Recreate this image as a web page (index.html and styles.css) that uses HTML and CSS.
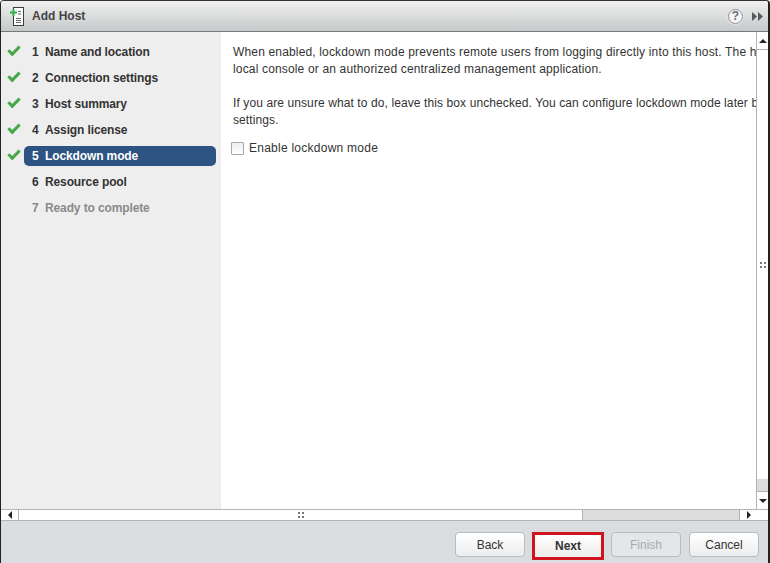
FILE: index.html
```html
<!DOCTYPE html>
<html lang="en">
<head>
    <meta charset="UTF-8">
    <title>Add Host</title>
    <link rel="stylesheet" href="styles.css">
</head>
<body>
    <div class="dialog">
        <header class="title-bar">
            <svg class="host-icon" width="15" height="19" viewBox="0 0 15 19">
                <rect x="3.500" y="0.500" width="10" height="18" fill="#fbfbfb" stroke="#3c3c3c"/>
                <path d="M6 11.500h5M6 13.500h5M6 15.500h5M8 4.500h3M8 7h3" stroke="#666" fill="none"/>
                <path d="M2.500 2h2v2.500H7v2H4.500V9h-2V6.500H0v-2h2.500z" fill="#35b04a"/>
            </svg>
            <span class="title">Add Host</span>
            <span class="help">?</span>
            <svg class="collapse" width="11" height="9" viewBox="0 0 11 9">
                <path d="M0 0l5 4.500L0 9zM6 0l5 4.500L6 9z" fill="#565a5e"/>
            </svg>
        </header>

        <div class="middle">
            <div class="panes">
                <nav class="steps">
                    <div class="step done"><span class="num">1</span>Name and location</div>
                    <div class="step done"><span class="num">2</span>Connection settings</div>
                    <div class="step done"><span class="num">3</span>Host summary</div>
                    <div class="step done"><span class="num">4</span>Assign license</div>
                    <div class="step done current"><span class="num">5</span>Lockdown mode</div>
                    <div class="step"><span class="num">6</span>Resource pool</div>
                    <div class="step disabled"><span class="num">7</span>Ready to complete</div>
                </nav>
                <main class="content">
                    <p>When enabled, lockdown mode prevents remote users from logging directly into this host. The host will only be accessible through a<br>local console or an authorized centralized management application.</p>
                    <p class="tight">If you are unsure what to do, leave this box unchecked. You can configure lockdown mode later by editing Security Profile in host<br>settings.</p>
                    <label class="check"><span class="box"></span>Enable lockdown mode</label>
                </main>
                <div class="vscroll">
                    <div class="sb-btn up"><span class="arrow-up"></span></div>
                    <div class="vthumb"><span class="grip"></span></div>
                    <div class="vtrack"></div>
                    <div class="sb-btn down"><span class="arrow-down"></span></div>
                </div>
            </div>
            <div class="hscroll">
                <div class="sb-btn left"><span class="arrow-left"></span></div>
                <div class="hthumb"><span class="grip"></span></div>
                <div class="htrack"></div>
                <div class="sb-btn right"><span class="arrow-right"></span></div>
                <div class="corner"></div>
            </div>
        </div>

        <footer class="buttons">
            <button class="btn">Back</button>
            <button class="btn next">Next</button>
            <button class="btn" disabled>Finish</button>
            <button class="btn">Cancel</button>
        </footer>
    </div>
</body>
</html>
```

FILE: styles.css
```css
html, body {
    margin: 0;
    padding: 0;
    height: 100%;
    overflow: hidden;
    background-color: #fff;
}

.dialog {
    display: flex;
    flex-direction: column;
    box-sizing: border-box;
    height: 563px;
    width: 770px;
    border-top: 1px solid #333;
    border-left: 1px solid #222;
    border-right: 2px solid #222;
    border-radius: 4px 4px 0 0;
    font-family: "Liberation Sans", Arial, sans-serif;
    font-size: 12px;
    color: #333;
}

.title-bar {
    display: flex;
    align-items: center;
    flex: none;
    height: 30px;
    padding: 0 5px 0 9px;
    background: linear-gradient(#f0f0f0, #c6c8c9);
    border-bottom: 1px solid #77797b;
    border-radius: 3px 3px 0 0;
}

.host-icon {
    margin: 1px 7px 0 0;
}

.title {
    flex: 1;
    font-weight: bold;
    color: #444;
}

.help {
    box-sizing: border-box;
    width: 15px;
    height: 15px;
    margin: 0 9px 0 0;
    border: 1px solid #8c8f92;
    border-radius: 50%;
    background: #f6f6f6;
    box-shadow: 0 0 0 1px #e4e5e6;
    text-align: center;
    font-size: 12px;
    line-height: 13px;
    font-weight: bold;
    color: #6a6d70;
}

.middle {
    flex: 1;
    display: flex;
    flex-direction: column;
    min-height: 0;
}

.panes {
    flex: 1;
    display: flex;
    min-height: 0;
}

.steps {
    flex: none;
    width: 220px;
    box-sizing: border-box;
    padding: 10px 5px 0 0;
    background-color: #eeeeee;
}

.step {
    position: relative;
    height: 20px;
    margin: 0 0 6px 23px;
    padding-left: 8px;
    border-radius: 5px;
    line-height: 20px;
    font-weight: bold;
    letter-spacing: -0.12px;
    color: #333;
}

.num {
    display: inline-block;
    width: 13px;
}

.step.done::before {
    content: "";
    position: absolute;
    left: -16px;
    top: 4px;
    width: 9px;
    height: 4px;
    border-left: 3px solid #45a849;
    border-bottom: 3px solid #45a849;
    transform: rotate(-45deg);
}

.step.current {
    background-color: #2c5382;
    color: #fff;
}

.step.disabled {
    color: #8a8a8a;
}

.content {
    flex: 1;
    min-width: 0;
    overflow: hidden;
    padding: 12px 0 0 12px;
    background-color: #fff;
    white-space: nowrap;
    line-height: 17px;
    letter-spacing: 0.16px;
}

.content p {
    margin: 0 0 17px;
}

.content .tight {
    letter-spacing: 0.1px;
}

.check {
    display: flex;
    align-items: center;
    margin: -6px 0 0 -2px;
    letter-spacing: 0.25px;
}

.box {
    width: 11px;
    height: 11px;
    margin-right: 5px;
    border: 1px solid #a8a8a8;
    border-radius: 1px;
    background: linear-gradient(#eeeeee, #fff);
}

.vscroll {
    flex: none;
    width: 11px;
    display: flex;
    flex-direction: column;
    border-left: 1px solid #b4b4b4;
    background-color: #fff;
}

.sb-btn {
    flex: none;
    display: flex;
    align-items: center;
    justify-content: center;
    background-color: #fff;
}

.vscroll .sb-btn {
    height: 17px;
}

.vscroll .up {
    border-bottom: 1px solid #b4b4b4;
}

.vscroll .down {
    border-top: 1px solid #b4b4b4;
}

.vthumb {
    flex: 1;
    display: flex;
    align-items: center;
    justify-content: center;
}

.vtrack {
    flex: none;
    height: 12px;
    background-color: #dcdcdc;
}

.grip {
    width: 6px;
    height: 6px;
    background:
        linear-gradient(#777, #777) 0 0 / 2px 2px no-repeat,
        linear-gradient(#777, #777) 4px 0 / 2px 2px no-repeat,
        linear-gradient(#777, #777) 0 4px / 2px 2px no-repeat,
        linear-gradient(#777, #777) 4px 4px / 2px 2px no-repeat;
}

.arrow-up,
.arrow-down,
.arrow-left,
.arrow-right {
    width: 0;
    height: 0;
    border: 4px solid transparent;
}

.arrow-up {
    border-top: 0;
    border-bottom-color: #222;
}

.arrow-down {
    border-bottom: 0;
    border-top-color: #222;
}

.arrow-left {
    border-left: 0;
    border-right-color: #222;
}

.arrow-right {
    border-right: 0;
    border-left-color: #222;
}

.hscroll {
    flex: none;
    display: flex;
    height: 10px;
    border-top: 1px solid #b4b4b4;
    border-bottom: 1px solid #b4b4b4;
    background-color: #fff;
}

.hscroll .left {
    width: 17px;
    border-right: 1px solid #b4b4b4;
}

.hscroll .right {
    width: 17px;
    border-left: 1px solid #b4b4b4;
}

.hthumb {
    flex: none;
    width: 563px;
    display: flex;
    align-items: center;
    justify-content: center;
    border-right: 1px solid #b4b4b4;
}

.htrack {
    flex: 1;
    background-color: #dcdcdc;
}

.corner {
    flex: none;
    width: 11px;
}

.buttons {
    flex: none;
    display: flex;
    justify-content: flex-end;
    align-items: flex-start;
    gap: 8px;
    box-sizing: border-box;
    height: 42px;
    padding: 11px 9px 0 0;
    background-color: #dadde0;
}

.btn {
    box-sizing: border-box;
    width: 70px;
    height: 25px;
    padding: 0;
    border: 1px solid #b9bcbf;
    border-radius: 4px;
    background: linear-gradient(#fff, #ececec);
    font-family: "Liberation Sans", Arial, sans-serif;
    font-size: 12px;
    color: #333;
}

.btn:disabled {
    color: #a8abae;
    background: #e4e6e8;
}

.next {
    width: 72px;
    height: 28px;
    margin: 0 -1px;
    border: 3px solid #d0141f;
    border-radius: 0;
    font-weight: bold;
}
```
